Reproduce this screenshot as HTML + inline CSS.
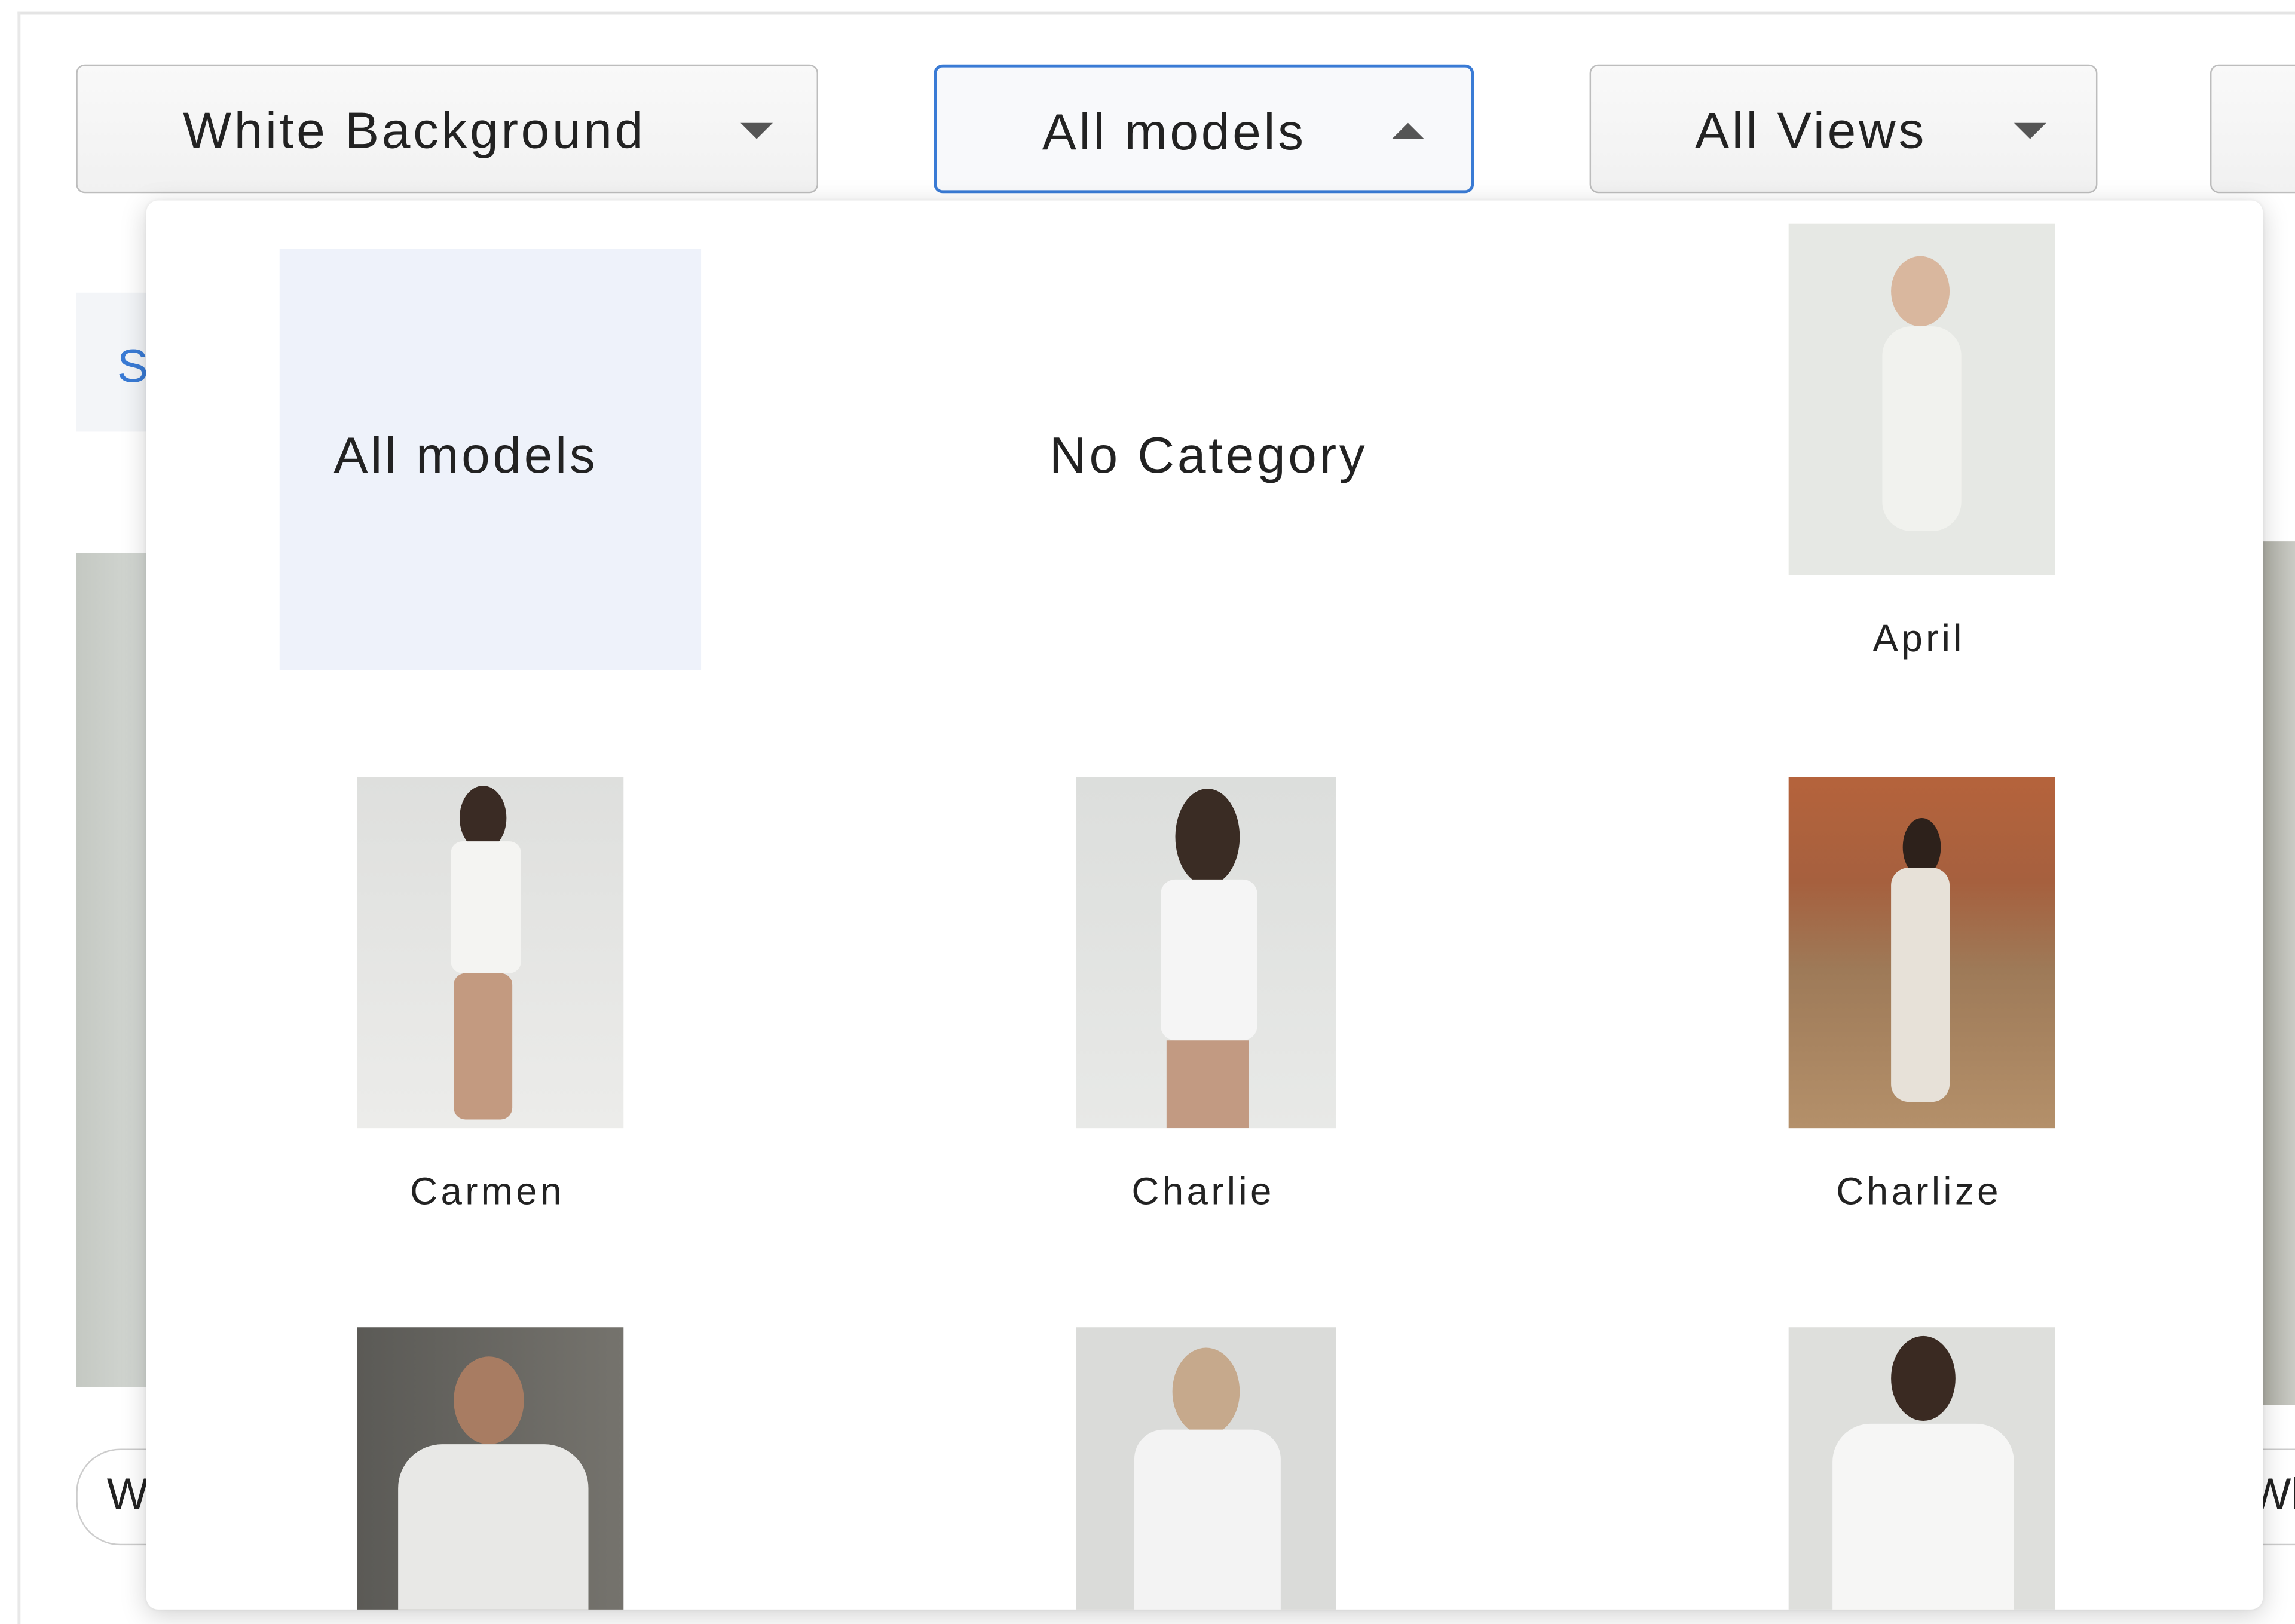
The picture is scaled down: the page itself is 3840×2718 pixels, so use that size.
<!DOCTYPE html>
<html><head><meta charset="utf-8"><style>
html,body{margin:0;padding:0;background:#fff;width:3840px;height:2718px;overflow:hidden}
#w{position:absolute;left:0;top:0;width:1568px;height:1110px;transform:scale(2.4490);transform-origin:0 0;font-family:"Liberation Sans",Arial,sans-serif;color:#222}
.a{position:absolute}
.dd{position:absolute;top:44px;height:88px;border:1.5px solid #bdbdbd;border-radius:6px;background:linear-gradient(#f9f9f9,#f1f1f1);box-sizing:border-box;font-size:35px;line-height:88px;letter-spacing:1.9px}
.car{position:absolute;width:0;height:0;border-left:11px solid transparent;border-right:11px solid transparent}
.img{position:absolute;overflow:hidden}
.lbl{position:absolute;font-size:26px;letter-spacing:2.2px;text-align:center;width:300px}
.hd{position:absolute;border-radius:50%}
.big{position:absolute;font-size:35px;letter-spacing:1.9px}
</style></head><body><div id="w">
<div class="a" style="left:12px;top:8px;width:1556px;height:2px;background:#e4e4e4"></div>
<div class="a" style="left:12px;top:8px;width:2px;height:1102px;background:#e8e8e8"></div>

<div class="dd" style="left:52px;width:507px"><span class="a" style="left:72px;top:1px">White Background</span><div class="car" style="left:453px;top:39px;border-top:11px solid #555"></div></div>
<div class="dd" style="left:638px;width:369px;border:2px solid #3a7bd5;background:#f8f9fb"><span class="a" style="left:72px;top:1px">All models</span><div class="car" style="left:311px;top:38px;border-bottom:11px solid #555"></div></div>
<div class="dd" style="left:1086px;width:347px"><span class="a" style="left:71px;top:1px">All Views</span><div class="car" style="left:289px;top:39px;border-top:11px solid #555"></div></div>
<div class="dd" style="left:1510px;width:80px"></div>

<div class="a" style="left:52px;top:200px;width:60px;height:95px;background:#f3f5f8"></div>
<div class="a" style="left:80px;top:232px;font-size:32px;color:#3a7bd5">S</div>
<div class="a" style="left:52px;top:378px;width:60px;height:570px;background:linear-gradient(90deg,#c4c8c2,#d8dcd8)"></div>
<div class="a" style="left:1540px;top:370px;width:28px;height:590px;background:linear-gradient(90deg,#a8a89e,#c9cac4)"></div>
<div class="a" style="left:52px;top:990px;width:80px;height:66px;border:1.5px solid #ccc;border-radius:30px;box-sizing:border-box;font-size:30px;line-height:62px;padding-left:20px">W</div>
<div class="a" style="left:1500px;top:990px;width:100px;height:66px;border:1.5px solid #ccc;border-radius:30px;box-sizing:border-box;font-size:30px;line-height:62px;padding-left:36px">Wh</div>

<div class="a" style="left:100px;top:137px;width:1446px;height:963px;background:#fff;border-radius:8px;box-shadow:0 4px 18px rgba(0,0,0,0.18),0 0 3px rgba(0,0,0,0.08);overflow:hidden">
 <div class="a" style="left:91px;top:33px;width:288px;height:288px;background:#eef2fa"></div>
 <div class="big" style="left:128px;top:155px">All models</div>
 <div class="big" style="left:617px;top:155px">No Category</div>

 <div class="img" style="left:1122px;top:16px;width:182px;height:240px;background:#e6e8e4">
  <div class="hd" style="left:70px;top:22px;width:40px;height:48px;background:#d9b79e"></div>
  <div class="a" style="left:64px;top:70px;width:54px;height:140px;background:#f1f2ee;border-radius:20px"></div>
 </div>
 <div class="lbl" style="left:1061px;top:284px">April</div>

 <div class="img" style="left:144px;top:394px;width:182px;height:240px;background:linear-gradient(#dedfdd,#ececea)">
  <div class="hd" style="left:70px;top:6px;width:32px;height:44px;background:#3a2b24"></div>
  <div class="a" style="left:64px;top:44px;width:48px;height:90px;background:#f4f4f2;border-radius:8px"></div>
  <div class="a" style="left:66px;top:134px;width:40px;height:100px;background:#c39a80;border-radius:8px"></div>
 </div>
 <div class="lbl" style="left:83px;top:662px">Carmen</div>

 <div class="img" style="left:635px;top:394px;width:178px;height:240px;background:linear-gradient(#dcdedc,#e8e9e7)">
  <div class="hd" style="left:68px;top:8px;width:44px;height:66px;background:#3a2c24"></div>
  <div class="a" style="left:58px;top:70px;width:66px;height:110px;background:#f5f5f5;border-radius:10px"></div>
  <div class="a" style="left:62px;top:180px;width:56px;height:60px;background:#c29a82"></div>
 </div>
 <div class="lbl" style="left:572px;top:662px">Charlie</div>

 <div class="img" style="left:1122px;top:394px;width:182px;height:240px;background:linear-gradient(#b5633c 0%,#a6603e 30%,#9e7a58 55%,#b4906a 100%)">
  <div class="hd" style="left:78px;top:28px;width:26px;height:40px;background:#2d211b"></div>
  <div class="a" style="left:70px;top:62px;width:40px;height:160px;background:#e7e1d8;border-radius:12px"></div>
 </div>
 <div class="lbl" style="left:1061px;top:662px">Charlize</div>

 <div class="img" style="left:144px;top:770px;width:182px;height:200px;background:linear-gradient(90deg,#5b5a56,#75736d)">
  <div class="hd" style="left:66px;top:20px;width:48px;height:60px;background:#a87c62"></div>
  <div class="a" style="left:28px;top:80px;width:130px;height:130px;background:#e8e8e6;border-radius:30px 30px 0 0"></div>
 </div>
 <div class="img" style="left:635px;top:770px;width:178px;height:200px;background:#dadbd9">
  <div class="hd" style="left:66px;top:14px;width:46px;height:60px;background:#c6a98c"></div>
  <div class="a" style="left:40px;top:70px;width:100px;height:130px;background:#f3f3f3;border-radius:20px 20px 0 0"></div>
 </div>
 <div class="img" style="left:1122px;top:770px;width:182px;height:200px;background:#dedfdc">
  <div class="hd" style="left:70px;top:6px;width:44px;height:58px;background:#3a2a22"></div>
  <div class="a" style="left:30px;top:66px;width:124px;height:140px;background:#f6f6f5;border-radius:26px 26px 0 0"></div>
 </div>
</div>
</div></body></html>
